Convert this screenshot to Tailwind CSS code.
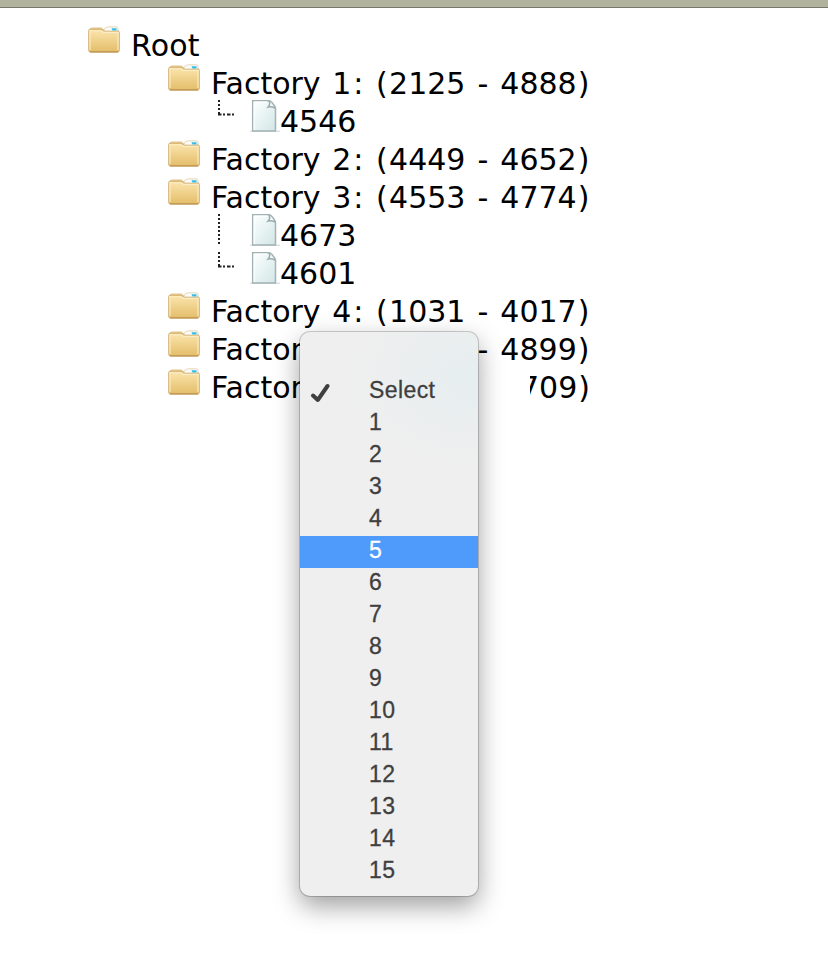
<!DOCTYPE html>
<html lang="en">
<head>
<meta charset="utf-8">
<title>Factory tree</title>
<script src="https://cdn.jsdelivr.net/npm/@tailwindcss/browser@4"></script>
</head>
<body class="relative h-[966px] w-[828px] overflow-hidden bg-white text-black">
<svg class="absolute h-0 w-0" aria-hidden="true">
  <defs>
    <linearGradient id="fg" x1="0" y1="0" x2="0" y2="1"><stop offset="0" stop-color="#fbe5ae"/><stop offset="1" stop-color="#e3bd69"/></linearGradient>
    <linearGradient id="pg" x1="0" y1="0" x2="1" y2="1"><stop offset="0" stop-color="#fff"/><stop offset=".35" stop-color="#eef7f7"/><stop offset="1" stop-color="#d3e5e6"/></linearGradient>
    <symbol id="folder" viewBox="0 0 32 28">
      <path d="M2 3.500Q2 2 4 2h9q1.500 0 2 1.500h14.500V8H2z" fill="#edce87" stroke="#dfc48a"/>
      <path d="M15.500 4.500Q17 .8 20 .8h8.500q1.500 0 1.500 2V5H15.500z" fill="#f5fbfc" stroke="#e6cba6" stroke-width=".8"/>
      <path d="M.7 4.500Q.7 3.300 2 3.300h11l3 1.700h14q1.300 0 1.300 1.200v18.300q0 1.700-2 1.700H2.700q-2 0-2-1.700z" fill="url(#fg)" stroke="#d3b078"/>
      <path d="M16.500 4.600 18 2h11v2.600z" fill="#f8fcfc"/>
      <path d="M23.500 2.200h5v2.400h-4z" fill="#35bce4"/>
      <path d="M2 24V4.800h10.500l3 1.700H30V24" fill="none" stroke="#fdedc4" stroke-width="1.100"/>
      <path d="M2 25.800h28" stroke="#bd9657" stroke-width="1.200"/>
    </symbol>
    <symbol id="page" viewBox="0 0 30 32">
      <path d="M0 31.300h30" stroke="#dedede" stroke-width="1.400"/>
      <path d="M2.700.8H19q1.500 0 3 1.600l2.700 3.800q.8 1 .8 2V31H2.700z" fill="url(#pg)" stroke="#a3b3b4" stroke-width="1.500"/>
      <path d="M4.200 30V2.200h13" fill="none" stroke="#fff" stroke-width="1.200"/>
      <path d="M19 1q1.800 3-.8 6 3.500-1 6.800 1" fill="#f8fbfb" stroke="#9aabad" stroke-width="1.500"/>
    </symbol>
    <symbol id="elbow" viewBox="0 0 18 32">
      <path d="M3 0v14" stroke="#222" stroke-width="2" stroke-dasharray="2 2" fill="none"/>
      <path d="M2 14.500h16" stroke="#222" stroke-width="2.200" stroke-dasharray="3.500 1.500 2 2" fill="none"/>
    </symbol>
    <symbol id="vline" viewBox="0 0 18 32">
      <path d="M3 0v31" stroke="#222" stroke-width="2" stroke-dasharray="2 2" fill="none"/>
    </symbol>
  </defs>
</svg>

<header class="h-2 border-b border-[#76776b] bg-[#b1b39e]"></header>

<main class="pt-[18px] pl-[88px] font-['DejaVu_Sans',sans-serif] text-[30px] leading-[40px]">
  <div class="flex h-[38px]"><svg class="h-7 w-8"><use href="#folder"/></svg><span class="ml-[11px] tracking-[0.2px]">Root</span></div>
  <ul class="pl-20">
    <li class="flex h-[38px]"><svg class="h-7 w-8"><use href="#folder"/></svg><span class="ml-[11px] whitespace-pre [word-spacing:1px]">Factory <span class="pl-[1px]">1</span><span class="px-[2px]">:</span> <span class="pr-[1.5px]">(</span>2125 <span class="px-[1.5px]">-</span> 4888<span class="pl-[1px]">)</span></span></li>
    <li class="flex h-[38px] pl-12"><svg class="-mt-0.5 h-8 w-[18px]"><use href="#elbow"/></svg><svg class="-mt-0.5 ml-4 h-8 w-[30px]"><use href="#page"/></svg><span>4546</span></li>
    <li class="flex h-[38px]"><svg class="h-7 w-8"><use href="#folder"/></svg><span class="ml-[11px] whitespace-pre [word-spacing:1px]">Factory <span class="pl-[1px]">2</span><span class="px-[2px]">:</span> <span class="pr-[1.5px]">(</span>4449 <span class="px-[1.5px]">-</span> 4652<span class="pl-[1px]">)</span></span></li>
    <li class="flex h-[38px]"><svg class="h-7 w-8"><use href="#folder"/></svg><span class="ml-[11px] whitespace-pre [word-spacing:1px]">Factory <span class="pl-[1px]">3</span><span class="px-[2px]">:</span> <span class="pr-[1.5px]">(</span>4553 <span class="px-[1.5px]">-</span> 4774<span class="pl-[1px]">)</span></span></li>
    <li class="flex h-[38px] pl-12"><svg class="-mt-0.5 h-8 w-[18px]"><use href="#vline"/></svg><svg class="-mt-0.5 ml-4 h-8 w-[30px]"><use href="#page"/></svg><span>4673</span></li>
    <li class="flex h-[38px] pl-12"><svg class="-mt-0.5 h-8 w-[18px]"><use href="#elbow"/></svg><svg class="-mt-0.5 ml-4 h-8 w-[30px]"><use href="#page"/></svg><span>4601</span></li>
    <li class="flex h-[38px]"><svg class="h-7 w-8"><use href="#folder"/></svg><span class="ml-[11px] whitespace-pre [word-spacing:1px]">Factory <span class="pl-[1px]">4</span><span class="px-[2px]">:</span> <span class="pr-[1.5px]">(</span>1031 <span class="px-[1.5px]">-</span> 4017<span class="pl-[1px]">)</span></span></li>
    <li class="flex h-[38px]"><svg class="h-7 w-8"><use href="#folder"/></svg><span class="ml-[11px] w-[266.500px]">Factor</span><span class="whitespace-pre [word-spacing:1px]"><span class="pr-[1.5px]">-</span> 4899<span class="pl-[1px]">)</span></span></li>
    <li class="flex h-[38px]"><svg class="h-7 w-8"><use href="#folder"/></svg><span class="ml-[11px] w-[319px]">Factor</span><span class="flex w-[60px] justify-end overflow-hidden"><span>709<span class="pl-[1px]">)</span></span></span></li>
  </ul>
</main>

<div class="absolute top-[332px] left-[300px] h-[564px] w-[178px] rounded-[10px] bg-[#efefef] bg-[radial-gradient(ellipse_130px_90px_at_100%_8%,#e6eef0,#efefef00)] pt-11 font-['Liberation_Sans',Arial,sans-serif] text-[23px] leading-7 tracking-[0.4px] text-[#3f3f3f] shadow-[0_0_0_1px_rgba(0,0,0,0.18),0_10px_26px_rgba(0,0,0,0.38)] [-webkit-text-stroke:0.3px]">
  <div class="flex h-8"><svg class="mt-[7px] ml-[10px] h-5 w-5" viewBox="0 0 20 20" fill="none"><path d="M3 12.500 7.800 17 17.500 3" stroke="#3f3f3f" stroke-width="4" stroke-linecap="round" stroke-linejoin="round"/></svg><div class="ml-[39px]">Select</div></div>
  <div class="h-8 pl-[69px]">1</div>
  <div class="h-8 pl-[69px]">2</div>
  <div class="h-8 pl-[69px]">3</div>
  <div class="h-8 pl-[69px]">4</div>
  <div class="h-8 bg-[#4e9bfb] pl-[69px] text-white">5</div>
  <div class="h-8 pl-[69px]">6</div>
  <div class="h-8 pl-[69px]">7</div>
  <div class="h-8 pl-[69px]">8</div>
  <div class="h-8 pl-[69px]">9</div>
  <div class="h-8 pl-[69px]">10</div>
  <div class="h-8 pl-[69px]">11</div>
  <div class="h-8 pl-[69px]">12</div>
  <div class="h-8 pl-[69px]">13</div>
  <div class="h-8 pl-[69px]">14</div>
  <div class="h-8 pl-[69px]">15</div>
</div>
</body>
</html>
